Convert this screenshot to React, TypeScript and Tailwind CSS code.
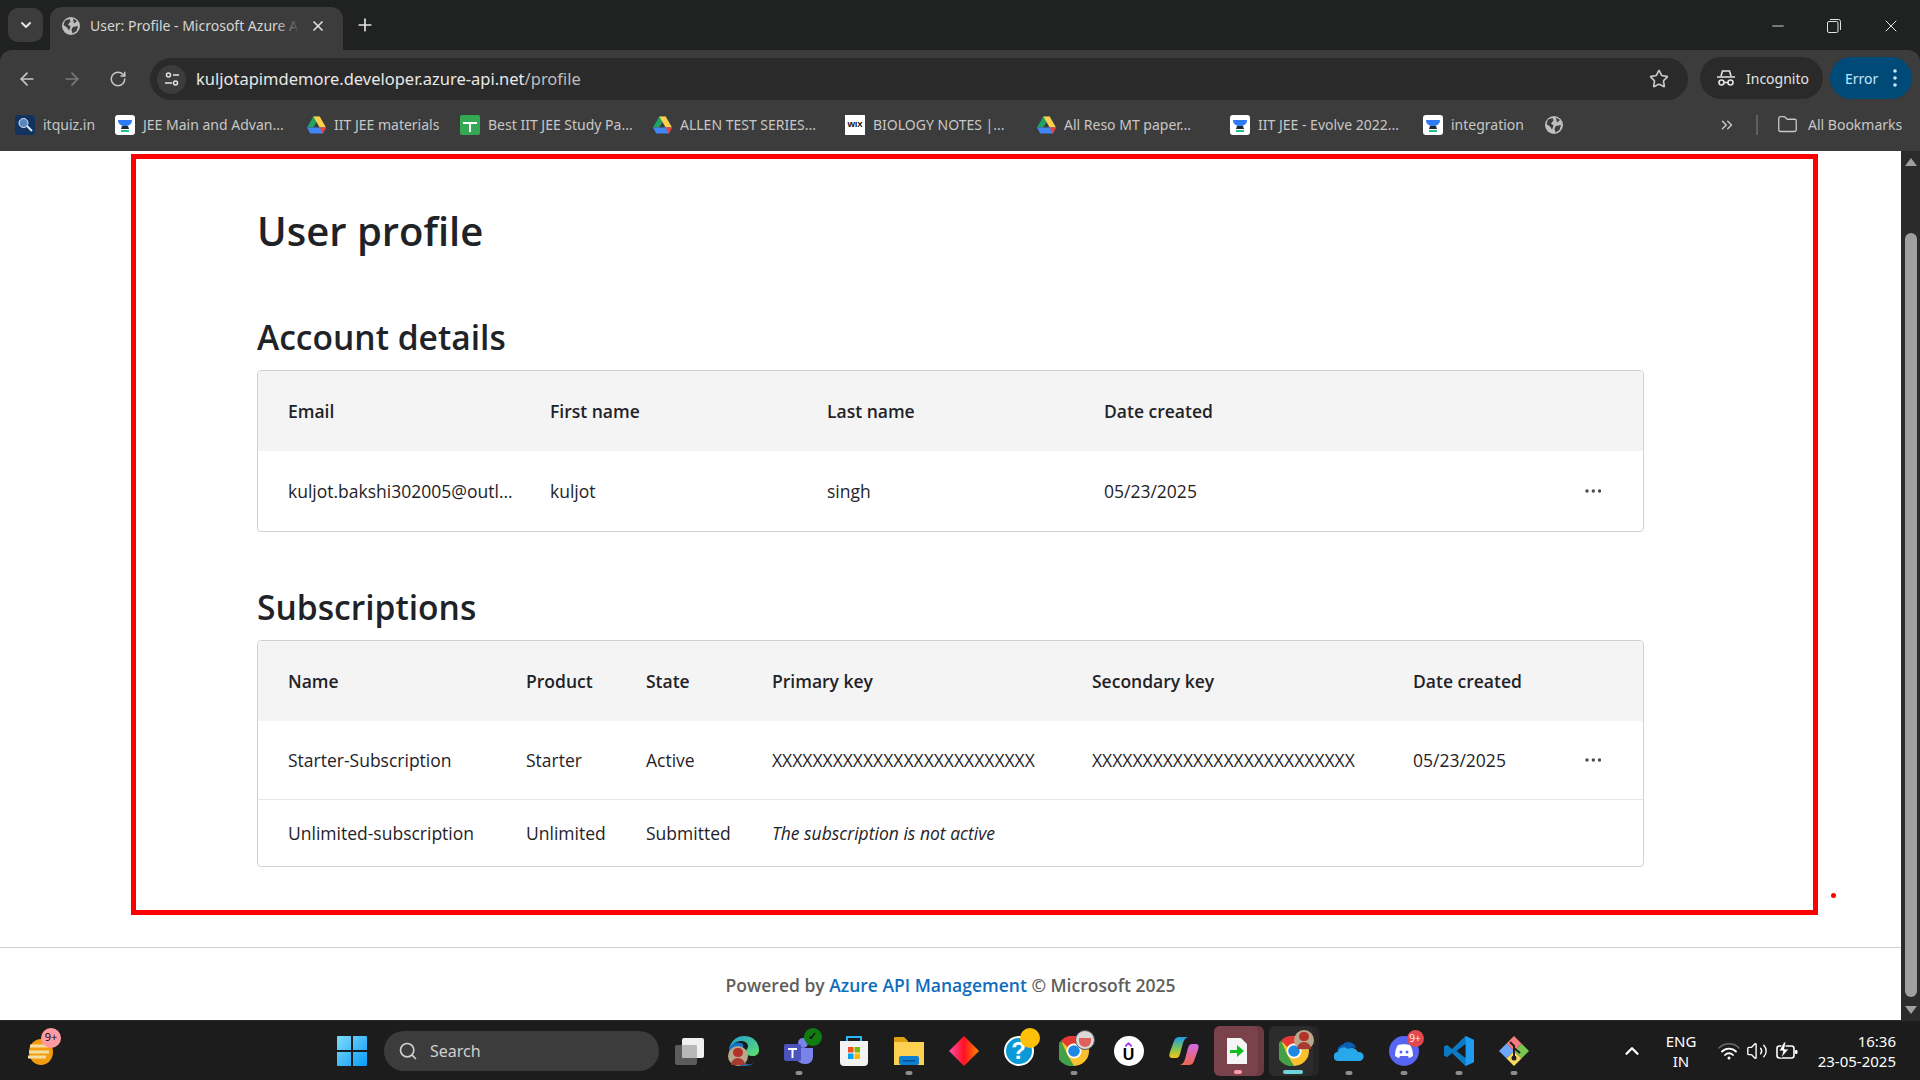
import React from 'react';
import {
  ArrowLeft, ArrowRight, RotateCw, Star, Plus, X, ChevronDown, Search, Minus,
  Folder, ChevronsRight, ChevronUp, Volume2,
} from 'lucide-react';

const pageFont = "font-['Open_Sans',sans-serif]";
const uiFont = "font-['Noto_Sans',sans-serif]";

const GlobeFav = ({ size = 18 }: { size?: number }) => (
  <svg width={size} height={size} viewBox="0 0 18 18">
    <circle cx="9" cy="9" r="9" fill="#bdbdbd" />
    <path d="M3 3.5 7.5 2l1 2.5L6 7.5l2.5 2-1.5 4-2-3L1.5 8z" fill="#3c3c3c" />
    <path d="M11 1.5 15 4l-3 2.5zM11 10l5-1-1.5 5-4 2.5-1-4z" fill="#3c3c3c" />
  </svg>
);

const Drive = () => (
  <svg width="19" height="18" viewBox="0 0 19 17">
    <path d="M6.3 0h6.4L6.3 11H0z" fill="#1fa463" />
    <path d="M12.7 0 19 11h-6.3L6.3 0z" fill="#ffd04b" />
    <path d="M0 11h19l-3.2 6H3.2z" fill="#4285f4" />
    <path d="M12.7 11H19l-3.2 6z" fill="#ea4335" />
  </svg>
);

const Biju = () => (
  <svg width="20" height="20" viewBox="0 0 20 20">
    <rect width="20" height="20" rx="3" fill="#fff" />
    <path d="M3 5h14c0 4-3 6-7 6S3 9 3 5z" fill="#2f7bf6" />
    <path d="M7 11h6l1 3H6z" fill="#1f2937" />
    <path d="M6 15h8v2H6z" fill="#1ec28b" />
  </svg>
);

const Sheet = () => (
  <svg width="20" height="20" viewBox="0 0 20 20">
    <rect width="20" height="20" rx="2" fill="#34a853" />
    <path d="M3 7h14v2h-6v8H9V9H3z" fill="#fff" />
  </svg>
);

const Wix = () => (
  <span className="flex h-5 w-5 items-center justify-center bg-white font-['Liberation_Sans',sans-serif] text-[8px] font-bold text-black">WIX</span>
);

const ItQuiz = () => (
  <svg width="20" height="20" viewBox="0 0 20 20">
    <rect width="20" height="20" rx="3" fill="#12335f" />
    <circle cx="8.500" cy="8" r="4.500" fill="#5a86c0" stroke="#dbe8f8" />
    <path d="m12 11 5 5" stroke="#dbe8f8" strokeWidth="2" />
  </svg>
);

const bookmarks = [
  { w: 'w-[100px]', icon: <ItQuiz />, label: 'itquiz.in' },
  { w: 'w-[192px]', icon: <Biju />, label: 'JEE Main and Advan...' },
  { w: 'w-[153px]', icon: <Drive />, label: 'IIT JEE materials' },
  { w: 'w-[193px]', icon: <Sheet />, label: 'Best IIT JEE Study Pa...' },
  { w: 'w-[192px]', icon: <Drive />, label: 'ALLEN TEST SERIES...' },
  { w: 'w-[192px]', icon: <Wix />, label: 'BIOLOGY NOTES |...' },
  { w: 'w-[193px]', icon: <Drive />, label: 'All Reso MT paper...' },
  { w: 'w-[193px]', icon: <Biju />, label: 'IIT JEE - Evolve 2022...' },
  { w: 'w-[122px]', icon: <Biju />, label: 'integration' },
];

const TitleBar = () => (
  <div className="flex h-[50px] items-end bg-[#202221] text-[#e3e3e3]">
    <div className="mb-2 ml-2 flex h-[34px] w-[35px] items-center justify-center rounded-[10px] bg-[#3c3c3c]">
      <ChevronDown size={16} strokeWidth={3} />
    </div>
    <div className="ml-[7px] flex h-[43px] w-[293px] items-center rounded-t-xl bg-[#3c3c3c] pb-[6px] pl-3">
      <GlobeFav />
      <div className="relative ml-[10px] w-[210px] overflow-hidden whitespace-nowrap text-[14px] text-[#d6d6d6]">
        User: Profile - Microsoft Azure API Management
        <div className="absolute inset-y-0 right-0 w-6 bg-gradient-to-r from-transparent to-[#3c3c3c]" />
      </div>
      <X size={16} strokeWidth={2.500} className="ml-[10px]" />
    </div>
    <Plus size={20} strokeWidth={2} className="mb-[15px] ml-3" />
    <div className="mb-[14px] ml-auto flex items-center">
      <div className="flex w-[56px] justify-center"><Minus size={18} strokeWidth={1.200} /></div>
      <div className="flex w-[56px] justify-center">
        <svg width="14" height="14" viewBox="0 0 14 14" fill="none" stroke="currentColor">
          <rect x="0.5" y="2.5" width="10.5" height="11" rx="1.5" />
          <path d="M3 .5h8.5A2 2 0 0 1 13.500 2.500V11" />
        </svg>
      </div>
      <div className="flex w-[58px] justify-center"><X size={20} strokeWidth={1.200} /></div>
    </div>
  </div>
);

const Toolbar = () => (
  <div className="bg-[#202221]">
    <div className="flex h-[50px] items-center rounded-t-xl bg-[#3c3c3c] pt-2 text-[#c7c7c7]">
      <ArrowLeft size={20} className="ml-[17px]" />
      <ArrowRight size={20} className="ml-[25px] text-[#7a7a7a]" />
      <RotateCw size={18} className="ml-[27px]" />
      <div className="ml-[23px] flex h-[42px] w-[1538px] items-center rounded-full bg-[#2a2a2a]">
        <div className="ml-[7px] flex h-[29px] w-[29px] items-center justify-center rounded-full bg-[#3c3c3c]">
          <svg width="16" height="16" viewBox="0 0 16 16" fill="none" stroke="#e3e3e3" strokeWidth="1.500">
            <circle cx="4.500" cy="4" r="2" />
            <circle cx="11.500" cy="12" r="2" />
            <path d="M9 4h6M1 12h7" />
          </svg>
        </div>
        <span className="ml-[10px] text-[16.500px] text-[#e8e8e8]">
          kuljotapimdemore.developer.azure-api.net<span className="text-[#bdbdbd]">/profile</span>
        </span>
        <Star size={20} className="ml-auto mr-[19px]" />
      </div>
      <div className="mb-[2px] ml-3 flex h-[42px] w-[123px] items-center rounded-full bg-[#2a2a2a] pl-4 text-[14px] text-[#e3e3e3]">
        <svg width="20" height="18" viewBox="0 0 20 18" fill="none" stroke="#e3e3e3" strokeWidth="1.600">
          <path d="M5 7l1.500-5h7L15 7M1 8h18" />
          <circle cx="5.500" cy="13.500" r="2.500" />
          <circle cx="14.500" cy="13.500" r="2.500" />
          <path d="M8 13.500h4" />
        </svg>
        <span className="ml-[10px]">Incognito</span>
      </div>
      <div className="mb-[2px] ml-[7px] flex h-[42px] w-[82px] items-center justify-between rounded-full bg-[#004a77] pl-[15px] pr-[13px] text-[14px] text-[#c2e7ff]">
        Error
        <svg width="8" height="20" viewBox="0 0 8 20" fill="#c2e7ff">
          <circle cx="4" cy="3" r="1.800" />
          <circle cx="4" cy="10" r="1.800" />
          <circle cx="4" cy="17" r="1.800" />
        </svg>
      </div>
    </div>
  </div>
);

const BookmarksBar = () => (
  <div className="flex h-[51px] items-center bg-[#3c3c3c] pb-[2px] pl-[15px] text-[14px] text-[#c7c7c7]">
    {bookmarks.map((b) => (
      <div key={b.label} className={`flex items-center gap-2 whitespace-nowrap ${b.w}`}>
        {b.icon}
        <span>{b.label}</span>
      </div>
    ))}
    <GlobeFav />
    <ChevronsRight size={18} className="ml-[155px]" />
    <div className="ml-[20px] h-5 w-[2px] bg-[#5f5f5f]" />
    <Folder size={21} strokeWidth={1.500} className="ml-[19px]" />
    <span className="ml-[10px] whitespace-nowrap">All Bookmarks</span>
  </div>
);

const Dots = () => (
  <svg width="16" height="4" viewBox="0 0 16 4" fill="#4a4a4a">
    <circle cx="2" cy="2" r="1.700" />
    <circle cx="8.300" cy="2" r="1.700" />
    <circle cx="14.500" cy="2" r="1.700" />
  </svg>
);

const tableHead = 'bg-[#f4f4f4] font-semibold';

const AccountTable = () => (
  <div className="mt-[11px] overflow-hidden rounded-[4px] border border-[#d1d1d1]">
    <div className={`grid h-[80px] grid-cols-[262px_277px_277px_1fr] items-center pl-[30px] ${tableHead}`}>
      <div>Email</div>
      <div>First name</div>
      <div>Last name</div>
      <div>Date created</div>
    </div>
    <div className="grid h-[80px] grid-cols-[262px_277px_277px_1fr_auto] items-center pl-[30px] pr-[42px]">
      <div>kuljot.bakshi302005@outl...</div>
      <div>kuljot</div>
      <div>singh</div>
      <div>05/23/2025</div>
      <Dots />
    </div>
  </div>
);

const subCols = 'grid-cols-[238px_120px_126px_320px_321px_1fr_auto]';

const SubscriptionsTable = () => (
  <div className="mt-[11px] overflow-hidden rounded-[4px] border border-[#d1d1d1]">
    <div className={`grid h-[80px] ${subCols} items-center pl-[30px] ${tableHead}`}>
      <div>Name</div>
      <div>Product</div>
      <div>State</div>
      <div>Primary key</div>
      <div>Secondary key</div>
      <div>Date created</div>
    </div>
    <div className={`grid h-[79px] ${subCols} items-center border-b border-[#e6e6e6] pl-[30px] pr-[42px]`}>
      <div>Starter-Subscription</div>
      <div>Starter</div>
      <div>Active</div>
      <div>XXXXXXXXXXXXXXXXXXXXXXXXXX</div>
      <div>XXXXXXXXXXXXXXXXXXXXXXXXXX</div>
      <div>05/23/2025</div>
      <Dots />
    </div>
    <div className={`grid h-[66px] ${subCols} items-center pl-[30px] pr-[42px]`}>
      <div>Unlimited-subscription</div>
      <div>Unlimited</div>
      <div>Submitted</div>
      <div className="col-span-3 italic">The subscription is not active</div>
    </div>
  </div>
);

const Scrollbar = () => (
  <div className="flex w-[19px] flex-col items-center bg-[#2b2b2b]">
    <div className="mt-[7px] h-0 w-0 border-x-[6px] border-b-[8px] border-x-transparent border-b-[#a0a0a0]" />
    <div className="mt-[67px] h-[764px] w-[12px] rounded-full bg-[#9f9f9f]" />
    <div className="mt-[9px] h-0 w-0 border-x-[6px] border-t-[8px] border-x-transparent border-t-[#a0a0a0]" />
  </div>
);

const Page = () => (
  <div className="relative flex h-[869px]">
    <div className={`flex-1 bg-white text-[17.500px] text-[#1f2328] ${pageFont}`}>
      <div className="ml-[131px] mt-[3px] h-[761px] w-[1687px] border-[5px] border-[#ff0000] pl-[121px] pr-[169px]">
        <h1 className="mt-[44px] text-[40px] font-semibold leading-[56px]">User profile</h1>
        <h2 className="mt-[56px] text-[33.600px] font-semibold leading-[44px]">Account details</h2>
        <AccountTable />
        <h2 className="mt-[53px] text-[33.600px] font-semibold leading-[44px]">Subscriptions</h2>
        <SubscriptionsTable />
      </div>
      <div className="mt-[32px] flex h-[73px] items-center justify-center border-t border-[#d1d1d1] pt-[2px] font-semibold text-[#605e5c]">
        Powered by&nbsp;<span className="text-[#0f6cbd]">Azure API Management</span>&nbsp;© Microsoft 2025
      </div>
    </div>
    <Scrollbar />
    <div className="absolute left-[1831px] top-[742px] h-[5px] w-[5px] rounded-full bg-[#ff0000]" />
  </div>
);

const Win = () => (
  <svg width="30" height="30" viewBox="0 0 30 30">
    <defs>
      <linearGradient id="win" x1="0" y1="0" x2="1" y2="1">
        <stop offset="0" stopColor="#7fdcfb" />
        <stop offset="1" stopColor="#0a9bf5" />
      </linearGradient>
    </defs>
    <path d="M0 1a1 1 0 0 1 1-1h13v14H0zM16 0h13a1 1 0 0 1 1 1v13H16zM0 16h14v14H1a1 1 0 0 1-1-1zM16 16h14v13a1 1 0 0 1-1 1H16z" fill="url(#win)" />
  </svg>
);

const Avatar = ({ className }: { className: string }) => (
  <span className={`absolute h-[20px] w-[20px] rounded-full bg-[#b9a88c] ${className}`}>
    <span className="absolute left-[5px] top-[2px] h-[9px] w-[10px] rounded-full bg-[#b5322c]" />
    <span className="absolute bottom-[1px] left-[3px] h-[7px] w-[14px] rounded-t-full bg-[#a8392f]" />
  </span>
);

const Chrome = () => (
  <svg width="30" height="30" viewBox="0 0 30 30">
    <circle cx="15" cy="15" r="15" fill="#fbc02d" />
    <path d="M15 0a15 15 0 0 1 13 7.500H15a7.500 7.500 0 0 0-6.500 3.750L2 4.500A15 15 0 0 1 15 0z" fill="#e53935" />
    <path d="M2 4.500 8.500 19 15 30A15 15 0 0 1 2 4.500z" fill="#43a047" />
    <circle cx="15" cy="15" r="7.500" fill="#fff" />
    <circle cx="15" cy="15" r="5.800" fill="#1e88e5" />
  </svg>
);

const dot = 'absolute bottom-[1px] left-1/2 h-[4px] w-[7px] -translate-x-1/2 rounded-full bg-[#8d8d8d]';

// the two open windows get a stacked highlight behind the icon
const Stacked = ({ back, front }: { back: string; front: string }) => (
  <>
    <span className={`absolute inset-y-0 left-[3px] w-[50px] rounded-md ${back}`} />
    <span className={`absolute inset-y-0 left-[3px] w-[44px] rounded-md ${front}`} />
  </>
);

const taskIcons: { key: string; node: React.ReactNode; pinned?: boolean; under?: React.ReactNode; over?: React.ReactNode }[] = [
  {
    key: 'view',
    node: (
      <svg width="30" height="28" viewBox="0 0 30 28">
        <rect x="1" y="8" width="22" height="20" rx="2" fill="#5c5c5c" />
        <rect x="8" y="1" width="22" height="20" rx="2" fill="#f0f0f0" />
        <rect x="8" y="8" width="15" height="13" rx="1" fill="#b8b8b8" />
      </svg>
    ),
  },
  {
    key: 'edge',
    node: (
      <span className="relative block h-[30px] w-[30px]">
        <svg width="30" height="30" viewBox="0 0 30 30">
          <defs>
            <linearGradient id="edge1" x1="0" y1="0" x2="1" y2="1">
              <stop offset="0" stopColor="#1f9fd8" />
              <stop offset="1" stopColor="#5fe06a" />
            </linearGradient>
          </defs>
          <path d="M15 0c9 0 15 6 15 14 0 4-3 6-6 6-4 0-7-1-7-4 0-3 2-3 2-6 0-3-3-5-7-5C6 5 2 9 0 14 1 6 7 0 15 0z" fill="url(#edge1)" />
          <path d="M0 14c1-6 7-9 12-7 3 1 3 4 1 6-4 4-3 12 5 15 2 1 6 0 8-2-3 3-7 4-11 4C6 30 0 23 0 14z" fill="#1173c9" />
        </svg>
        <Avatar className="-left-[1px] bottom-0" />
      </span>
    ),
  },
  {
    key: 'teams',
    pinned: true,
    node: (
      <span className="relative block h-[32px] w-[32px]">
        <svg width="32" height="32" viewBox="0 0 32 32">
          <circle cx="20" cy="8" r="5" fill="#7b83eb" />
          <path d="M12 13h18v9a7 7 0 0 1-7 7 10 10 0 0 1-11-10z" fill="#7b83eb" />
          <rect x="1" y="9" width="17" height="17" rx="2" fill="#4b53bc" />
          <path d="M5 13h9v2h-3.500v8h-2v-8H5z" fill="#fff" />
        </svg>
        <span className="absolute -right-[7px] -top-[7px] flex h-[18px] w-[18px] items-center justify-center rounded-full bg-[#107c10] text-[11px] font-bold text-[#101010]">✓</span>
      </span>
    ),
  },
  {
    key: 'store',
    node: (
      <svg width="30" height="30" viewBox="0 0 30 30">
        <path d="M8 6V1h14v5" fill="none" stroke="#29b6f6" strokeWidth="2" />
        <path d="M1 5h28v21a4 4 0 0 1-4 4H5a4 4 0 0 1-4-4z" fill="#f3f3f3" />
        <rect x="9" y="11" width="5.500" height="5.500" fill="#f25022" />
        <rect x="15.500" y="11" width="5.500" height="5.500" fill="#7fba00" />
        <rect x="9" y="17.500" width="5.500" height="5.500" fill="#00a4ef" />
        <rect x="15.500" y="17.500" width="5.500" height="5.500" fill="#ffb900" />
      </svg>
    ),
  },
  {
    key: 'files',
    pinned: true,
    node: (
      <svg width="30" height="28" viewBox="0 0 30 28">
        <path d="M0 1a1 1 0 0 1 1-1h9l4 4v4H0z" fill="#e0a00f" />
        <path d="M0 5h30v23H0z" fill="#fcd050" />
        <rect x="5" y="19" width="20" height="9" rx="2" fill="#0c7fd4" />
        <rect x="9" y="23" width="12" height="1.500" fill="#04508c" />
      </svg>
    ),
  },
  {
    key: 'diamond',
    node: (
      <svg width="30" height="30" viewBox="0 0 30 30">
        <defs>
          <linearGradient id="dia" x1="0" y1="0" x2="1" y2="0">
            <stop offset="0" stopColor="#ff4fb0" />
            <stop offset="0.5" stopColor="#ff1020" />
            <stop offset="1" stopColor="#ff8a00" />
          </linearGradient>
        </defs>
        <path d="M15 0 30 15 15 30 0 15z" fill="url(#dia)" />
      </svg>
    ),
  },
  {
    key: 'help',
    node: (
      <span className="relative block h-[30px] w-[30px]">
        <span className="flex h-[30px] w-[30px] items-center justify-center rounded-full border-2 border-white bg-[#0a9bd6] font-['Liberation_Sans',sans-serif] text-[24px] font-bold text-white">?</span>
        <span className="absolute -right-[6px] -top-[8px] h-[20px] w-[20px] rounded-full bg-[#ffc107]" />
      </span>
    ),
  },
  {
    key: 'chrome1',
    pinned: true,
    node: (
      <span className="relative block h-[30px] w-[30px]">
        <Chrome />
        <span className="absolute -right-[6px] -top-[6px] h-[20px] w-[20px] rounded-full border border-[#555] bg-[#d8d8d8]">
          <span className="absolute bottom-[2px] left-[3px] h-[9px] w-[12px] rounded-b-full bg-[#e0605c]" />
        </span>
      </span>
    ),
  },
  {
    key: 'udemy',
    node: (
      <span className="flex h-[30px] w-[30px] flex-col items-center justify-center rounded-full bg-white">
        <ChevronUp size={11} strokeWidth={4} className="text-[#a435f0]" />
        <span className="-mt-[3px] font-['Liberation_Sans',sans-serif] text-[16px] font-bold leading-[16px] text-black">U</span>
      </span>
    ),
  },
  {
    key: 'copilot',
    node: (
      <svg width="30" height="30" viewBox="0 0 30 30">
        <defs>
          <linearGradient id="cop1" x1="0" y1="0" x2="0" y2="1">
            <stop offset="0" stopColor="#1e9be8" />
            <stop offset="0.6" stopColor="#8ac64b" />
            <stop offset="1" stopColor="#f5c518" />
          </linearGradient>
          <linearGradient id="cop2" x1="0" y1="0" x2="0" y2="1">
            <stop offset="0" stopColor="#d06be8" />
            <stop offset="1" stopColor="#f0654a" />
          </linearGradient>
        </defs>
        <path d="M10 1h9c-3 1-4 3-5 6l-3 11c-1 3-2 4-4 4H3C0 22 0 19 1 16l4-11c1-3 3-4 5-4z" fill="url(#cop1)" />
        <path d="M20 29h-9c3-1 4-3 5-6l3-11c1-3 2-4 4-4h4c3 0 3 3 2 6l-4 11c-1 3-3 4-5 4z" fill="url(#cop2)" />
      </svg>
    ),
  },
  {
    key: 'file',
    under: <Stacked back="bg-[#6d3a43]" front="bg-[#7a424a]" />,
    over: <span className="absolute bottom-[2px] left-[23px] h-[4px] w-[8px] rounded-full bg-[#ff9aa8]" />,
    node: (
      <svg width="20" height="26" viewBox="0 0 20 26" className="relative -ml-[3px]">
        <path d="M0 0h14l6 6v20H0z" fill="#f5f5f5" />
        <path d="M3 12h7V7l7 6-7 6v-4H3z" fill="#10c020" />
      </svg>
    ),
  },
  {
    key: 'chrome2',
    under: <Stacked back="bg-[#252525]" front="bg-[#2c2c2c]" />,
    over: <span className="absolute bottom-[2px] left-[17px] h-[4px] w-[20px] rounded-full bg-[#6fd3dc]" />,
    node: (
      <span className="relative block h-[30px] w-[30px]">
        <Chrome />
        <Avatar className="-right-[5px] -top-[6px]" />
      </span>
    ),
  },
  {
    key: 'onedrive',
    pinned: true,
    node: (
      <svg width="30" height="20" viewBox="0 0 30 20">
        <path d="M5 14a6 6 0 0 1 3-10 8 8 0 0 1 14 3 6 6 0 0 0-8 3z" fill="#0a5fb4" />
        <path d="M4 20a4 4 0 0 1 0-9 6 6 0 0 1 10-3 7 7 0 0 1 10 3 4.500 4.500 0 0 1 2 9z" fill="#28a8ea" />
      </svg>
    ),
  },
  {
    key: 'discord',
    pinned: true,
    node: (
      <span className="relative block h-[30px] w-[30px]">
        <span className="flex h-[30px] w-[30px] items-center justify-center rounded-full bg-[#5865f2]">
          <svg width="18" height="14" viewBox="0 0 18 14">
            <path d="M3 1c3-1 9-1 12 0 2 3 3 6 3 11-2 1-3 2-4 2l-1-2H5l-1 2c-1 0-2-1-4-2 0-5 1-8 3-11z" fill="#fff" />
            <circle cx="6" cy="8" r="1.500" fill="#5865f2" />
            <circle cx="12" cy="8" r="1.500" fill="#5865f2" />
          </svg>
        </span>
        <span className="absolute -right-[5px] -top-[6px] flex h-[17px] w-[17px] items-center justify-center rounded-full bg-[#e5484d] font-['Open_Sans',sans-serif] text-[10px] text-white">9+</span>
      </span>
    ),
  },
  {
    key: 'vscode',
    pinned: true,
    node: (
      <svg width="30" height="30" viewBox="0 0 30 30">
        <path d="M21.500 0 30 4v22l-8.500 4L8 17l-5 4-3-1.500V10.500L3 9l5 4z" fill="#0a7ac6" />
        <path d="M21.500 0 30 4v22l-8.500 4z" fill="#1f9cf0" />
        <path d="M21.500 8v14l-9-7z" fill="#1c1c1c" />
        <path d="M0 19.500 3 21l4-3.500-3-2.500z" fill="#0a7ac6" />
      </svg>
    ),
  },
  {
    key: 'git',
    pinned: true,
    node: (
      <svg width="30" height="30" viewBox="0 0 30 30">
        <path d="m15 15-7.500-7.500L0 15l7.500 7.500z" fill="#6ea8fe" />
        <path d="M15 15l7.500-7.500L30 15l-7.500 7.500z" fill="#7cc452" />
        <path d="M15 15l-7.500 7.500L15 30l7.500-7.500z" fill="#f6d860" />
        <path d="M15 15 7.500 7.500 15 0l7.500 7.500z" fill="#f47c7c" />
        <path d="M11 6l4 4v12M15 12l6 5" stroke="#202020" strokeWidth="2" fill="none" />
        <circle cx="15" cy="22" r="2.500" fill="#202020" />
      </svg>
    ),
  },
];

const Taskbar = () => (
  <div className="flex h-[60px] items-center border-t border-[#2e2e2e] bg-[#1c1c1c] text-white">
    <div className="relative ml-[27px] h-[28px] w-[28px]">
      <svg width="28" height="28" viewBox="0 0 28 28">
        <ellipse cx="14" cy="15" rx="12" ry="13" fill="#f39c12" />
        <path d="M3 9h18M2 15h20M1 20h18" stroke="#f5dfa0" strokeWidth="3" />
      </svg>
      <span className="absolute -right-[6px] -top-[9px] flex h-[20px] w-[20px] items-center justify-center rounded-full bg-[#ff9aa2] font-['Open_Sans',sans-serif] text-[11px] text-black">9+</span>
    </div>
    <div className="ml-[282px]"><Win /></div>
    <div className={`ml-[17px] flex h-[40px] w-[275px] items-center rounded-full bg-[#3c3c3c] pl-[14px] text-[16px] text-[#cfcfcf] ${uiFont}`}>
      <Search size={20} />
      <span className="ml-3">Search</span>
    </div>
    <div className="ml-[2px] flex">
      {taskIcons.map((t) => (
        <div key={t.key} className="relative flex h-[50px] w-[55px] items-center justify-center">
          {t.under}
          {t.node}
          {t.over}
          {t.pinned && <span className={dot} />}
        </div>
      ))}
    </div>
    <ChevronUp size={22} strokeWidth={2.500} className="ml-[80px]" />
    <div className={`ml-[14px] w-[48px] text-center text-[15px] leading-[20px] ${uiFont}`}>
      <div>ENG</div>
      <div>IN</div>
    </div>
    <svg width="22" height="18" viewBox="0 0 22 18" fill="none" strokeLinecap="round" className="ml-[13px]">
      <path d="M1 6a14 14 0 0 1 20 0" stroke="#6b6b6b" strokeWidth="1.500" />
      <path d="M4 9.500a10 10 0 0 1 14 0M7 13a5.500 5.500 0 0 1 8 0" stroke="#fff" strokeWidth="1.800" />
      <circle cx="11" cy="16" r="1.500" fill="#fff" />
    </svg>
    <Volume2 size={22} strokeWidth={1.500} className="ml-[6px]" />
    <svg width="22" height="18" viewBox="0 0 22 18" fill="none" className="ml-[8px]">
      <rect x="1" y="4" width="17" height="12" rx="2.500" stroke="#fff" strokeWidth="1.600" />
      <rect x="19" y="8" width="2.500" height="4" rx="1" fill="#fff" />
      <path d="M8 0 3 9h4l-2 7 8-9H8.500L10 0z" fill="#fff" stroke="#1c1c1c" strokeWidth="0.800" />
    </svg>
    <div className={`ml-auto mr-[24px] text-right text-[15px] leading-[20px] ${uiFont}`}>
      <div>16:36</div>
      <div>23-05-2025</div>
    </div>
  </div>
);

export default function App() {
  return (
    <div className={`flex h-[1080px] w-[1920px] flex-col overflow-hidden ${uiFont}`}>
      <TitleBar />
      <Toolbar />
      <BookmarksBar />
      <Page />
      <Taskbar />
    </div>
  );
}
